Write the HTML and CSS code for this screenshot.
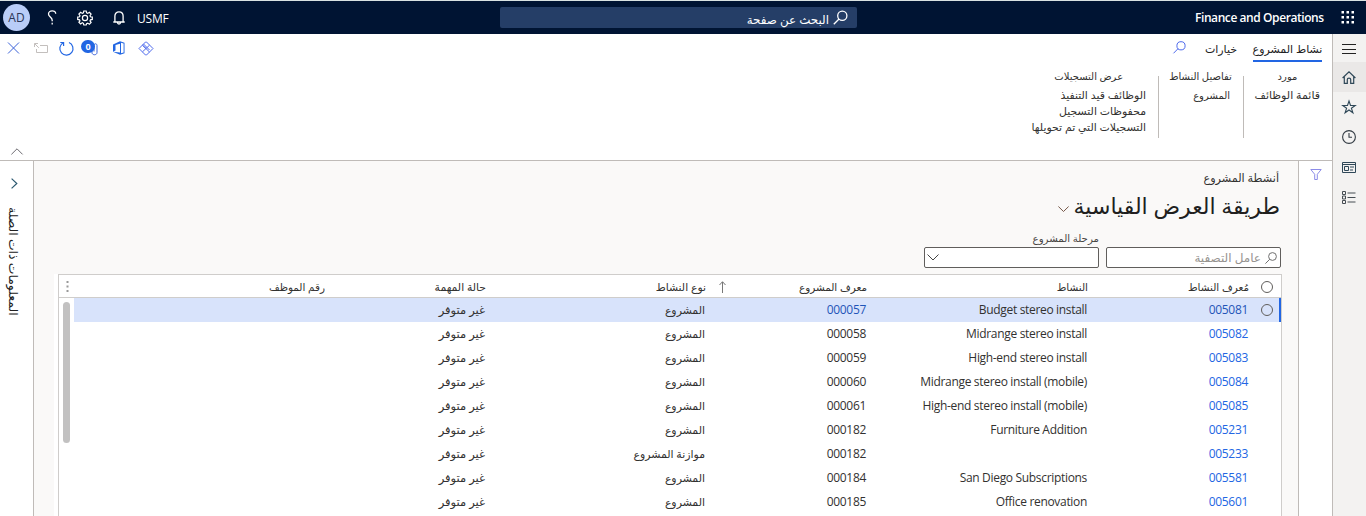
FILE: index.html
```html
<!DOCTYPE html>
<html lang="ar" dir="rtl">
<head>
<meta charset="utf-8">
<title>Finance and Operations</title>
<link rel="stylesheet" href="styles.css">
</head>
<body>
<header class="topbar">
  <svg class="waffle" width="14" height="14" viewBox="0 0 14 14" fill="#fff"><path d="M.5 0h2.500v2.500H.5zM5.500 0H8v2.500H5.500zM10.500 0H13v2.500h-2.500zM.5 5H3v2.500H.5zM5.500 5H8v2.500H5.500zM10.500 5H13v2.500h-2.500zM.5 10H3v2.500H.5zM5.500 10H8v2.500H5.500zM10.500 10H13v2.500h-2.500z"/></svg>
  <span class="brand" dir="ltr">Finance and Operations</span>
  <div class="search">
    <svg width="15" height="15" viewBox="0 0 15 15" fill="none" stroke="#fff" stroke-width="1.300"><circle cx="9.300" cy="5.700" r="4.600"/><path d="M6 9L.8 14.200"/></svg>
    <span class="search-text">البحث عن صفحة</span>
  </div>
  <div class="tools" dir="ltr">
    <span class="avatar">AD</span>
    <svg class="help" width="10" height="15" viewBox="0 0 10 15" fill="none" stroke="#fff" stroke-width="1.300"><path d="M8.700 3.700C8.700 2 7.200.8 5.200.8S1.500 2 1.500 3.900c0 2.900 3.700 3.300 3.700 6.300v1"/><path d="M5.200 12.700v1.800"/></svg>
    <svg class="gear" width="16" height="16" viewBox="0 0 16 16" fill="none" stroke="#fff" stroke-width="1.200"><path d="M6.800 1h2.400l.4 1.900 1.100.5 1.700-1.100 1.700 1.700L13 5.700l.5 1.100 1.800.3v2.300l-1.800.4-.5 1.100 1.100 1.600-1.700 1.700-1.700-1.100-1.100.5L9.200 15H6.800l-.4-1.700-1.100-.5-1.700 1.100-1.700-1.700L3 10.900l-.5-1.100L.7 9.400V7.100l1.800-.3L3 5.700 1.900 4l1.700-1.700 1.700 1.100 1.100-.5z"/><circle cx="8" cy="8" r="2.600"/></svg>
    <svg class="bell" width="12" height="14" viewBox="0 0 12 14" fill="none" stroke="#fff" stroke-width="1.300"><path d="M.3 11h11.400M1.900 11V5C1.900 2.500 3.600.8 6 .8S10.100 2.500 10.100 5v6M4.500 11.500c0 2 3 2 3 0"/></svg>
    <span class="company">USMF</span>
  </div>
</header>
<div class="shell">
  <nav class="rail">
    <span class="rail-item"><svg width="14" height="11" viewBox="0 0 14 11" stroke="#222"><path d="M0 .5h14M0 5.500h14M0 9.500h14"/></svg></span>
    <span class="rail-item active"><svg width="14" height="13" viewBox="0 0 14 13" fill="none" stroke="#2f4858" stroke-width="1.200"><path d="M.6 7L7 .9 13.400 7M2.300 5.800v6.600h3V8.600c0-2 3.400-2 3.400 0v3.800h3V5.800"/></svg></span>
    <span class="rail-item"><svg width="14" height="14" viewBox="0 0 14 14" fill="none" stroke="#2f4858" stroke-width="1.100"><path d="M7 1l1.500 4.500h4.700L9.400 8.200l1.500 4.600L7 10l-3.900 2.800 1.500-4.600L.8 5.500h4.700z"/></svg></span>
    <span class="rail-item"><svg width="14" height="14" viewBox="0 0 14 14" fill="none" stroke="#333c44" stroke-width="1.100"><circle cx="7" cy="7" r="6.400"/><path d="M7 3v4.300h3"/></svg></span>
    <span class="rail-item"><svg width="14" height="11" viewBox="0 0 14 11" fill="none" stroke="#2f4858"><path d="M.5.500h13v10H.5zM.5 2.500h13M2.500 4.500h4v4h-4zM8 5h4M8 8h3"/></svg></span>
    <span class="rail-item"><svg width="14" height="13" viewBox="0 0 14 13" fill="none" stroke="#454c52"><path d="M.5.500h3v3h-3zM.5 5h3v3h-3zM.5 9.500h3v3h-3zM5.500 2h8M5.500 6.500h8M5.500 11h8"/></svg></span>
  </nav>
  <div class="main">
    <section class="ribbon">
      <div class="tabs">
        <span class="tab current">نشاط المشروع</span>
        <span class="tab second">خيارات</span>
        <svg class="tab-search" width="13" height="13" viewBox="0 0 13 13" fill="none" stroke="#4f6bed"><circle cx="8" cy="4.800" r="4.100"/><path d="M5 7.700L.5 12.300"/></svg>
        <div class="actions" dir="ltr">
          <svg width="13" height="12" viewBox="0 0 13 12" fill="none" stroke="#3b62d9"><path d="M1 .5l11 11M12 .5L1 11.500"/></svg>
          <svg class="detach" width="14" height="11" viewBox="0 0 14 11" fill="none" stroke="#c3bfbd"><path d="M6 2.500h7.500v7h-11V6M.5 4V.5H4M.8.8l4 4"/></svg>
          <svg class="refresh" width="15" height="15" viewBox="0 0 15 15" fill="none" stroke="#2266e3" stroke-width="1.200"><path d="M4.200 1.800A6.600 6.600 0 1 0 10 1.500M1.300 1.500h3.300v3.400"/></svg>
          <span class="attach"><svg width="8" height="13" viewBox="0 0 8 13" fill="none" stroke="#3b62d9"><path d="M2 3v6.500c0 3 5 3 5 0V2.500C7 .2 4 .2 4 2.500v6"/></svg><span class="badge">0</span></span>
          <svg class="office" width="12" height="14" viewBox="0 0 12 14" fill="#2266e3"><path fill-rule="evenodd" d="M0 3.500L7 .3l4.500 1.400v10.600L7 13.700 0 10.800l7 .7V2.800L2.500 4v5.500L0 10.800zM8 1.800v10.400l2.600-.7v-9z"/></svg>
          <svg class="apps" width="16" height="15" viewBox="0 0 16 15" fill="none" stroke="#4f6bed"><path d="M1 7.500L7.500 1h1L15 7.500 8.500 14h-1zM4.500 4.200L8 7.500l3.500-3.300M4.500 4.200l7 6.800M8 7.500l-3.500 3.300M5.500 3l6 6"/></svg>
        </div>
      </div>
      <div class="groups">
        <div class="group g1"><b>مورد</b><span>قائمة الوظائف</span></div>
        <div class="group g2"><b>تفاصيل النشاط</b><span class="small">المشروع</span></div>
        <div class="group g3"><b>عرض التسجيلات</b><span>الوظائف قيد التنفيذ</span><span>محفوظات التسجيل</span><span>التسجيلات التي تم تحويلها</span></div>
      </div>
      <svg class="collapse" width="12" height="7" viewBox="0 0 12 7" fill="none" stroke="#6e6c72"><path d="M.4 6.400L6 .8l5.600 5.600"/></svg>
    </section>
    <div class="workspace">
      <aside class="filter"><svg width="12" height="11" viewBox="0 0 12 11" fill="none" stroke="#8c8ce8"><path d="M.8.500h10.400L7.300 5.300v5.200H4.700V5.300z"/></svg></aside>
      <main class="content">
        <div class="caption">أنشطة المشروع</div>
        <div class="title"><span>طريقة العرض القياسية</span><svg width="11" height="6" viewBox="0 0 11 6" fill="none" stroke="#765848"><path d="M.4.500l5.100 5 5.100-5"/></svg></div>
        <div class="fields">
          <div class="box quick"><svg width="12" height="12" viewBox="0 0 12 12" fill="none" stroke="#707070"><circle cx="7.500" cy="4.500" r="3.900"/><path d="M4.700 7.300L.4 11.600"/></svg><span>عامل التصفية</span></div>
          <div class="stage"><span>مرحلة المشروع</span><div class="box combo"><svg width="12" height="7" viewBox="0 0 12 7" fill="none" stroke="#444"><path d="M.5.500L6 6 11.500.5"/></svg></div></div>
        </div>
        <div class="sheet"><div class="grid">
          <div class="row head"><span><i class="radio"></i></span><span>مُعرف النشاط</span><span>النشاط</span><span class="sorted">معرف المشروع<svg width="7" height="12" viewBox="0 0 7 12" fill="none" stroke="#777"><path d="M3.500 12V1M.5 4l3-3.300 3 3.300"/></svg></span><span class="wide">نوع النشاط</span><span class="wide">حالة المهمة</span><span>رقم الموظف</span><svg class="more" width="3" height="11" viewBox="0 0 3 11" fill="#999"><path d="M.5 0h2v2h-2zM.5 4.500h2v2h-2zM.5 9h2v2h-2z"/></svg></div>
          <div class="body">
            <div class="rows">
              <div class="row selected"><span><i class="radio"></i></span><a>005081</a><bdi>Budget stereo install</bdi><a>000057</a><span class="proj">المشروع</span><span class="na">غير متوفر</span></div>
              <div class="row"><span></span><a>005082</a><bdi>Midrange stereo install</bdi><bdi>000058</bdi><span class="proj">المشروع</span><span class="na">غير متوفر</span></div>
              <div class="row"><span></span><a>005083</a><bdi>High-end stereo install</bdi><bdi>000059</bdi><span class="proj">المشروع</span><span class="na">غير متوفر</span></div>
              <div class="row"><span></span><a>005084</a><bdi>Midrange stereo install (mobile)</bdi><bdi>000060</bdi><span class="proj">المشروع</span><span class="na">غير متوفر</span></div>
              <div class="row"><span></span><a>005085</a><bdi>High-end stereo install (mobile)</bdi><bdi>000061</bdi><span class="proj">المشروع</span><span class="na">غير متوفر</span></div>
              <div class="row"><span></span><a>005231</a><bdi>Furniture Addition</bdi><bdi>000182</bdi><span class="proj">المشروع</span><span class="na">غير متوفر</span></div>
              <div class="row"><span></span><a>005233</a><bdi></bdi><bdi>000182</bdi><span class="proj">موازنة المشروع</span><span class="na">غير متوفر</span></div>
              <div class="row"><span></span><a>005581</a><bdi>San Diego Subscriptions</bdi><bdi>000184</bdi><span class="proj">المشروع</span><span class="na">غير متوفر</span></div>
              <div class="row"><span></span><a>005601</a><bdi>Office renovation</bdi><bdi>000185</bdi><span class="proj">المشروع</span><span class="na">غير متوفر</span></div>
            </div>
            <div class="scroll"><div class="thumb"></div></div>
          </div>
        </div></div>
      </main>
      <aside class="related">
        <svg width="7" height="11" viewBox="0 0 7 11" fill="none" stroke="#2c5970" stroke-width="1.200"><path d="M.6.600l5.200 4.900L.6 10.400"/></svg>
        <span class="related-text">المعلومات ذات الصلة</span>
      </aside>
    </div>
  </div>
</div>
</body>
</html>
```
FILE: styles.css
```css
* { box-sizing: border-box; }
body { margin: 0; width: 1366px; height: 516px; overflow: hidden; background: #fff; color: #323130; font: 12px/16px "Open Sans", "DejaVu Sans", sans-serif; display: flex; flex-direction: column; }
svg { display: block; flex: none; overflow: visible; }
span, b { white-space: nowrap; }
.topbar { flex: none; height: 34px; border-top: 1px solid #d9e2e2; background: #001433; color: #fff; display: flex; align-items: center; padding-right: 11px; }
.brand { margin-right: 17px; width: 129px; font: 600 12px/16px "Open Sans", sans-serif; letter-spacing: -.42px; }
.search { margin-right: 338px; width: 357px; height: 21px; background: #253e67; border-radius: 2px; display: flex; align-items: center; padding-right: 9px; gap: 4px; }
.search-text { font-size: 11.900px; padding-top: 2px; }
.tools { margin-right: auto; display: flex; align-items: center; padding-left: 3px; }
.avatar { width: 27px; height: 27px; border-radius: 50%; background: #b9cdf8; color: #2b3656; text-align: center; line-height: 27px; }
.help { margin-left: 17px; }
.gear { margin-left: 20px; }
.bell { margin-left: 20px; }
.company { margin-left: 12px; letter-spacing: -.2px; padding-top: 2px; }
.shell { flex: 1; display: flex; min-height: 0; }
.rail { width: 34px; background: #f3f2f1; border-left: 1px solid #bfbbb8; display: flex; flex-direction: column; }
.rail-item { height: 30px; display: flex; align-items: center; justify-content: center; padding-right: 1px; }
.rail-item.active { background: #eae8e7; }
.rail-item:first-child { height: 28px; padding-top: 2px; }
.main { flex: 1; display: flex; flex-direction: column; min-width: 0; }
.ribbon { height: 127px; border-bottom: 1px solid #bfbbb8; display: flex; flex-direction: column; }
.tabs { display: flex; height: 28px; padding-right: 10px; }
.tab { height: 28px; padding-top: 7px; font-size: 11px; display: flex; justify-content: center; color: #222; }
.current { width: 69px; border-bottom: 2px solid #2266e3; }
.second { width: 32px; margin-right: 16px; }
.tab-search { margin: 7px 19px 0 0; }
.actions { margin-right: auto; display: flex; padding: 0 0 0 7px; height: 28px; align-items: center; }
.detach { margin-left: 14px; }
.refresh { margin-left: 11px; }
.attach { position: relative; width: 17px; height: 17px; margin-left: 7px; display: flex; justify-content: flex-end; }
.attach svg { margin-top: 3px; }
.badge { position: absolute; left: 0; top: 0; width: 14px; height: 13px; border-radius: 7px; background: #2266e3; color: #fff; font: bold 9px/13px "Open Sans", sans-serif; text-align: center; }
.office { margin-left: 15px; }
.apps { margin-left: 13px; }
.groups { display: flex; padding: 14px 12px 0 0; }
.group { height: 62px; display: flex; flex-direction: column; line-height: 16px; font-size: 11px; }
.group b { font-size: 10px; font-weight: 500; line-height: 13px; text-align: center; height: 12px; margin-top: -6px; margin-bottom: 5px; }
.g1 { width: 77px; border-left: 1px solid #bfbbb8; padding-left: 11px; }
.g2 { width: 85px; border-left: 1px solid #bfbbb8; padding: 0 11px 0 10px; }
.g3 { padding-right: 12px; font-size: 10.900px; }
.small { font-size: 10px; padding-right: 2px; }
.collapse { margin: auto auto 5px 11px; }
.workspace { flex: 1; display: flex; min-height: 0; }
.filter { width: 34px; border-left: 1px solid #bfbbb8; padding: 8px 10px 0 0; }
.content { flex: 1; background: #faf9f8; display: flex; flex-direction: column; min-width: 0; }
.caption { padding: 9px 19px 0 0; height: 25px; font-size: 11.200px; }
.title { height: 38px; padding-right: 18px; display: flex; align-items: center; gap: 5px; color: #201f1e; font-size: 22px; line-height: 36px; }
.title svg { margin-top: 8px; }
.fields { display: flex; align-items: flex-end; padding-right: 17px; gap: 7px; height: 44px; }
.box { width: 175px; height: 21px; border: 1px solid #605e5c; border-radius: 2px; background: #fff; display: flex; align-items: center; padding: 0 3px 0 2px; }
.quick { gap: 4px; color: #96938f; }
.combo { justify-content: flex-end; }
.stage { display: flex; flex-direction: column; font-size: 10.200px; color: #484644; }
.stage span { height: 17px; }
.sheet { flex: 1; margin: 6px 16px 0 20px; background: #fff; padding-left: 4px; min-height: 0; }
.grid { border: 1px solid #cfcdcb; border-bottom: 0; height: 100%; overflow: hidden; }
.row { height: 24px; display: grid; grid-template-columns: 32px 161px 221px 161px 220px 161px 1fr; align-items: center; }
.row > * { line-height: 24px; text-align: right; }
.head { height: 23px; border-bottom: 1px solid #cfcdcb; font-size: 10.400px; position: relative; }
.head > span { display: flex; align-items: center; }
.head .wide { font-size: 10.800px; }
.sorted svg { margin-right: auto; margin-left: 13px; }
.more { position: absolute; left: 7px; top: 6px; }
.radio { display: block; width: 12px; height: 12px; border: 1px solid #605e5c; border-radius: 50%; margin-right: 8px; }
.body { display: flex; }
.rows { flex: 1; }
.rows .row { font-size: 12px; }
.rows a { color: #2266e3; }
.rows bdi, .rows a { letter-spacing: -.32px; padding-right: 1px; direction: ltr; }
.rows .proj { font-size: 10.900px; padding-right: 1px; }
.rows .na { font-size: 11.500px; padding-right: 1px; }
.selected { background: #d8e3fb; box-shadow: inset -2px 0 #2266e3; }
.rows .selected a { color: #1f55b8; }
.scroll { width: 15px; padding-top: 4px; }
.thumb { width: 7px; height: 141px; margin-right: 4px; border-radius: 4px; background: #c2c1c1; }
.related { width: 34px; border-right: 1px solid #bfbbb8; display: flex; flex-direction: column; align-items: flex-end; padding: 17px 0 0 8px; }
.related svg { margin-left: 3px; }
.related-text { writing-mode: vertical-rl; direction: ltr; margin: 18px 0 0 -3px; font-size: 12.400px; color: #222; }
```
